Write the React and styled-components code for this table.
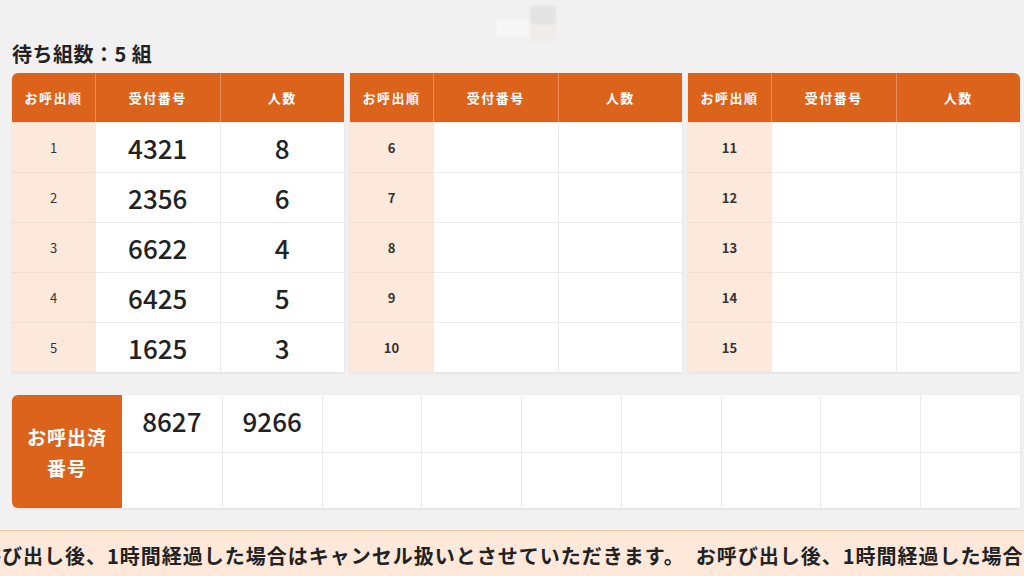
import React from 'react'
import styled, { createGlobalStyle } from 'styled-components'

const GlobalStyle = createGlobalStyle`
    html, body {
        margin: 0;
        padding: 0;
        background: #f1f1f1;
        font-family: "Noto Sans CJK JP", "Noto Sans", sans-serif;
        color: #222;
    }
    #root {
        width: 1024px;
        height: 576px;
        overflow: hidden;
    }
`

const Page = styled.div`
    height: 576px;
    display: flex;
    flex-direction: column;
`
const Main = styled.div`
    padding: 0 4px 0 12px;
`
const LogoArea = styled.div`
    height: 45px;
    display: flex;
    justify-content: center;
    align-items: flex-start;
    padding-top: 6px;
    box-sizing: border-box;
`
const Logo = styled.div`
    display: flex;
    align-items: flex-end;
    filter: blur(1.5px);
    margin-left: 20px;
`
const LogoBlockLeft = styled.div`
    width: 34px;
    height: 16px;
    background: #f6f6f6;
    margin-bottom: 6px;
`
const LogoBlockRight = styled.div`
    width: 26px;
    height: 36px;
    background: linear-gradient(#e3e3e3 0%, #e3e3e3 50%, #efecea 50%);
`
const Title = styled.div`
    height: 28px;
    font-size: 20px;
    font-weight: bold;
    line-height: 22px;
    color: #222;
    letter-spacing: 0.5px;
    margin-top: -2px;
    margin-bottom: 2px;
`
const Tables = styled.div`
    display: grid;
    grid-template-columns: repeat(3, 1fr);
    gap: 6px;
`
const Table = styled.div`
    display: grid;
    grid-template-columns: 83px 1fr 1fr;
    grid-auto-rows: 50px;
    grid-template-rows: 49px;
    background: #fff;
    border-radius: ${p => p.$round === 'left' ? '6px 0 0 0' : p.$round === 'right' ? '0 6px 0 0' : '0'};
    overflow: hidden;
    box-shadow: 0 1px 3px rgba(0, 0, 0, 0.08);
`
const HeadCell = styled.div`
    background: #dc631b;
    color: #fff;
    font-size: 13px;
    font-weight: bold;
    letter-spacing: 1.5px;
    display: flex;
    align-items: center;
    justify-content: center;
    border-left: ${p => p.$first ? 'none' : '1px solid #e88d5a'};
`
const OrderCell = styled.div`
    background: #fde9dc;
    font-size: 13px;
    font-weight: ${p => p.$bold ? 'bold' : 'normal'};
    color: #333;
    display: flex;
    align-items: center;
    justify-content: center;
    border-top: 1px solid #f4ddd0;
`
const DataCell = styled.div`
    font-size: 26px;
    font-weight: 500;
    color: #222;
    display: flex;
    align-items: center;
    justify-content: center;
    border-left: 1px solid #ececec;
    border-top: 1px solid #ececec;
`
const Called = styled.div`
    margin-top: 23px;
    display: flex;
    height: 113px;
    box-shadow: 0 1px 3px rgba(0, 0, 0, 0.08);
    border-radius: 6px 0 0 6px;
`
const CalledLabel = styled.div`
    width: 110px;
    background: #dc631b;
    color: #fff;
    border-radius: 6px 0 0 6px;
    font-size: 19px;
    font-weight: bold;
    line-height: 31px;
    display: flex;
    flex-direction: column;
    align-items: center;
    justify-content: center;
    letter-spacing: 1px;
`
const CalledGrid = styled.div`
    flex: 1;
    display: grid;
    grid-template-columns: repeat(9, 1fr);
    grid-template-rows: 1fr 1fr;
    background: #fff;
`
const CalledCell = styled.div`
    font-size: 26px;
    font-weight: 500;
    color: #222;
    display: flex;
    align-items: center;
    justify-content: center;
    padding-bottom: 6px;
    box-sizing: border-box;
    border-left: ${p => p.$first ? 'none' : '1px solid #ececec'};
    border-top: ${p => p.$top ? 'none' : '1px solid #ececec'};
`
const Ticker = styled.div`
    margin-top: 22px;
    flex: 1;
    background: #fde8da;
    border-top: 1px solid #f3c6aa;
    overflow: hidden;
    white-space: nowrap;
    display: flex;
    align-items: center;
`
const TickerText = styled.div`
    font-size: 20px;
    font-weight: bold;
    color: #222;
    letter-spacing: 1px;
    margin-left: -40px;
    padding-top: 4px;
`

const waiting = [
    {order: 1, number: '4321', people: '8'},
    {order: 2, number: '2356', people: '6'},
    {order: 3, number: '6622', people: '4'},
    {order: 4, number: '6425', people: '5'},
    {order: 5, number: '1625', people: '3'},
]

const calledNumbers = ['8627', '9266']

const message = 'お呼び出し後、1時間経過した場合はキャンセル扱いとさせていただきます。'

class App extends React.Component {
    renderTable = (start, round) => {
        const rows = [0, 1, 2, 3, 4].map(i => {
            const order = start + i
            const item = waiting.find(w => w.order === order)
            return (
                <React.Fragment key={order}>
                    <OrderCell $bold={start > 1}>{order}</OrderCell>
                    <DataCell>{item ? item.number : ''}</DataCell>
                    <DataCell>{item ? item.people : ''}</DataCell>
                </React.Fragment>
            )
        })
        return (
            <Table $round={round}>
                <HeadCell $first>お呼出順</HeadCell>
                <HeadCell>受付番号</HeadCell>
                <HeadCell>人数</HeadCell>
                {rows}
            </Table>
        )
    }

    render() {
        const cells = Array.from({length: 18}, (_, i) => i)
        return (
            <Page>
                <GlobalStyle />
                <Main>
                    <LogoArea>
                        <Logo>
                            <LogoBlockLeft />
                            <LogoBlockRight />
                        </Logo>
                    </LogoArea>
                    <Title>待ち組数：5 組</Title>
                    <Tables>
                        {this.renderTable(1, 'left')}
                        {this.renderTable(6)}
                        {this.renderTable(11, 'right')}
                    </Tables>
                    <Called>
                        <CalledLabel>
                            <span>お呼出済</span>
                            <span>番号</span>
                        </CalledLabel>
                        <CalledGrid>
                            {cells.map(i => (
                                <CalledCell key={i} $first={i % 9 === 0} $top={i < 9}>
                                    {calledNumbers[i] || ''}
                                </CalledCell>
                            ))}
                        </CalledGrid>
                    </Called>
                </Main>
                <Ticker>
                    <TickerText>{message}　{message}</TickerText>
                </Ticker>
            </Page>
        )
    }
}

export default App
